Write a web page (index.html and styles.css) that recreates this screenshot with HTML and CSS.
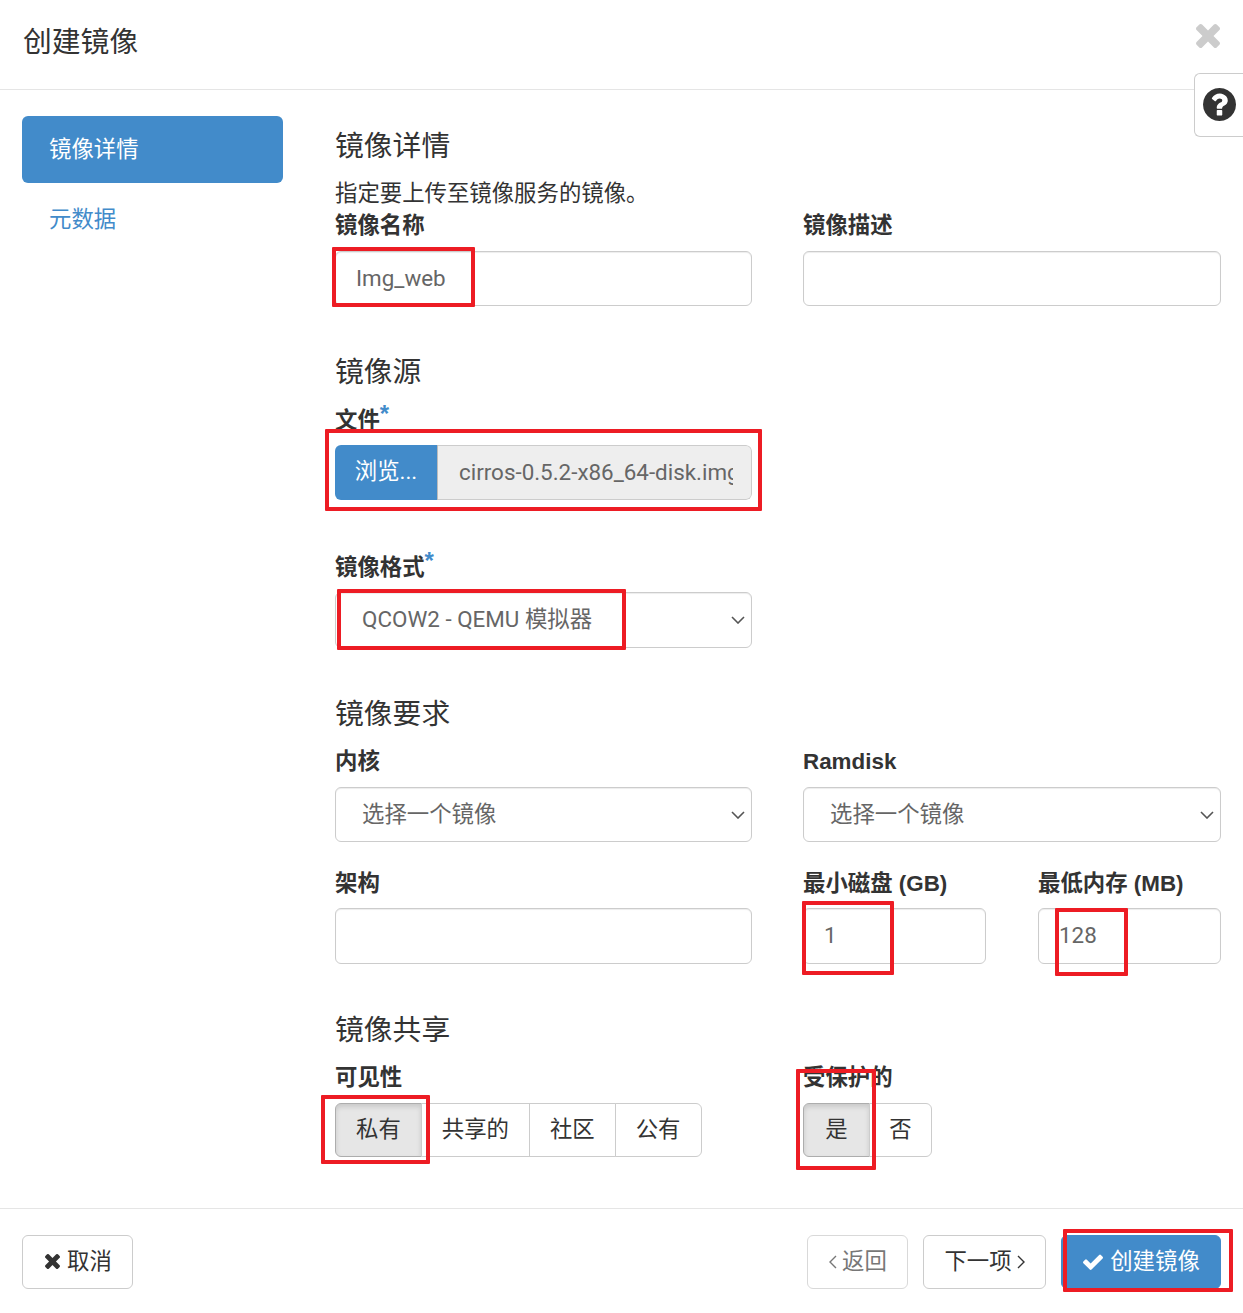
FILE: index.html
```html
<!DOCTYPE html>
<html lang="zh-CN">
<head>
<meta charset="utf-8">
<title>创建镜像</title>
<link rel="stylesheet" href="styles.css">
</head>
<body>
<div class="page">
  <header class="modal-header">
    <h1 class="modal-title">创建镜像</h1>
    <svg class="close-icon" viewBox="110 103 1188 1188"><path d="M1298 1059q0 40-28 68l-136 136q-28 28-68 28t-68-28l-294-294-294 294q-28 28-68 28t-68-28l-136-136q-28-28-28-68t28-68l294-294-294-294q-28-28-28-68t28-68l136-136q28-28 68-28t68 28l294 294 294-294q28-28 68-28t68 28l136 136q28 28 28 68t-28 68l-294 294 294 294q28 28 28 68z"/></svg>
  </header>
  <div class="help-tab">
    <svg class="help-icon" viewBox="0 128 1536 1536"><path d="M896 1376v-192q0-14-9-23t-23-9h-192q-14 0-23 9t-9 23v192q0 14 9 23t23 9h192q14 0 23-9t9-23zm256-672q0-88-55.5-163t-138.5-116-170-41q-243 0-371 213-15 24 8 42l132 100q7 6 19 6 16 0 25-12 53-68 86-92 34-24 86-24 48 0 85.5 26t37.5 59q0 38-20 61t-68 45q-63 28-115.5 86.5t-52.5 125.5v36q0 14 9 23t23 9h192q14 0 23-9t9-23q0-19 21.5-49.5t54.5-49.5q32-18 49-28.5t46-35 44.5-48 28-60.5 12.5-81zm384 192q0 209-103 385.5t-279.5 279.5-385.5 103-385.5-103-279.5-279.5-103-385.5 103-385.5 279.5-279.5 385.5-103 385.5 103 279.5 279.5 103 385.5z"/></svg>
  </div>

  <div class="modal-body">
    <nav class="side-nav">
      <a class="side-link side-link-active">镜像详情</a>
      <a class="side-link">元数据</a>
    </nav>
    <main class="content">
      <section class="section">
        <h2 class="section-title">镜像详情</h2>
        <p class="section-help">指定要上传至镜像服务的镜像。</p>
        <div class="two-col">
          <div class="field">
            <label class="field-label">镜像名称</label>
            <input class="control" type="text" value="Img_web">
          </div>
          <div class="field">
            <label class="field-label">镜像描述</label>
            <input class="control" type="text">
          </div>
        </div>
      </section>

      <section class="section">
        <h2 class="section-title">镜像源</h2>
        <div class="two-col">
          <div class="field field-file">
            <label class="field-label">文件<span class="req">*</span></label>
            <div class="file-box">
              <span class="file-button">浏览...</span>
              <span class="file-name"><span class="file-name-clip">cirros-0.5.2-x86_64-disk.img</span></span>
            </div>
          </div>
        </div>
        <div class="two-col">
          <div class="field">
            <label class="field-label">镜像格式<span class="req">*</span></label>
            <div class="select-wrap">
              <select class="control control-select control-tall"><option>QCOW2 - QEMU 模拟器</option></select>
              <svg class="select-chev" viewBox="0 0 14 8"><path d="m1 1 6 6 6-6"/></svg>
            </div>
          </div>
        </div>
      </section>

      <section class="section">
        <h2 class="section-title">镜像要求</h2>
        <div class="two-col">
          <div class="field">
            <label class="field-label">内核</label>
            <div class="select-wrap">
              <select class="control control-select"><option>选择一个镜像</option></select>
              <svg class="select-chev" viewBox="0 0 14 8"><path d="m1 1 6 6 6-6"/></svg>
            </div>
          </div>
          <div class="field">
            <label class="field-label">Ramdisk</label>
            <div class="select-wrap">
              <select class="control control-select"><option>选择一个镜像</option></select>
              <svg class="select-chev" viewBox="0 0 14 8"><path d="m1 1 6 6 6-6"/></svg>
            </div>
          </div>
        </div>
        <div class="two-col row-tight">
          <div class="field">
            <label class="field-label">架构</label>
            <input class="control control-tall" type="text">
          </div>
          <div class="sub-cols">
            <div class="field">
              <label class="field-label">最小磁盘 (GB)</label>
              <input class="control control-tall" type="text" value="1">
            </div>
            <div class="field">
              <label class="field-label">最低内存 (MB)</label>
              <input class="control control-tall" type="text" value="128">
            </div>
          </div>
        </div>
      </section>

      <section class="section section-last">
        <h2 class="section-title">镜像共享</h2>
        <div class="two-col">
          <div class="field">
            <label class="field-label">可见性</label>
            <div class="btn-group">
              <span class="toggle toggle-on">私有</span>
              <span class="toggle">共享的</span>
              <span class="toggle">社区</span>
              <span class="toggle">公有</span>
            </div>
          </div>
          <div class="field">
            <label class="field-label">受保护的</label>
            <div class="btn-group">
              <span class="toggle toggle-on toggle-yes">是</span>
              <span class="toggle toggle-no">否</span>
            </div>
          </div>
        </div>
      </section>
    </main>
  </div>

  <footer class="modal-footer">
    <button class="btn btn-cancel" type="button">
      <svg class="btn-icon-x" viewBox="110 103 1188 1188"><path d="M1298 1059q0 40-28 68l-136 136q-28 28-68 28t-68-28l-294-294-294 294q-28 28-68 28t-68-28l-136-136q-28-28-28-68t28-68l294-294-294-294q-28-28-28-68t28-68l136-136q28-28 68-28t68 28l294 294 294-294q28-28 68-28t68 28l136 136q28 28 28 68t-28 68l-294 294 294 294q28 28 28 68z"/></svg>取消
    </button>
    <div class="footer-right">
      <button class="btn btn-back" type="button">
        <svg class="chev" viewBox="0 0 8 14"><path d="M7 1 1 7l6 6"/></svg>返回
      </button>
      <button class="btn btn-next" type="button">
        下一项<svg class="chev" viewBox="0 0 8 14"><path d="m1 1 6 6-6 6"/></svg>
      </button>
      <button class="btn btn-primary" type="button">
        <svg class="btn-icon-check" viewBox="121 294 1550 1228"><path d="M1671 566q0 40-28 68l-724 724-136 136q-28 28-68 28t-68-28l-136-136-362-362q-28-28-28-68t28-68l136-136q28-28 68-28t68 28l294 295 656-657q28-28 68-28t68 28l136 136q28 28 28 68z"/></svg>创建镜像
      </button>
    </div>
  </footer>

  <div class="mark mark-name"></div>
  <div class="mark mark-file"></div>
  <div class="mark mark-format"></div>
  <div class="mark mark-disk"></div>
  <div class="mark mark-ram"></div>
  <div class="mark mark-private"></div>
  <div class="mark mark-protected"></div>
  <div class="mark mark-create"></div>
</div>
</body>
</html>
```
FILE: styles.css
```css
* { box-sizing: border-box; }
html, body { margin: 0; padding: 0; background: #fff; }
body {
  font-family: Roboto, "Noto Sans CJK SC", sans-serif;
  font-size: 22.4px;
  color: #333;
}
.page { position: relative; width: 1243px; height: 1313px; overflow: hidden; }

.modal-header {
  height: 90px;
  border-bottom: 1px solid #e5e5e5;
  padding: 0 23px;
  display: flex;
  justify-content: space-between;
  align-items: flex-start;
}
.modal-title { margin: 22px 0 0; font-size: 28.8px; font-weight: 400; line-height: 40px; color: #333; }
.close-icon { width: 24px; height: 24px; margin-top: 24px; fill: #ccc; }
.help-tab {
  position: absolute;
  top: 73px;
  right: 0;
  width: 49px;
  height: 64px;
  background: #fff;
  border: 1px solid #ccc;
  border-right: 0;
  border-radius: 6px 0 0 6px;
  display: flex;
  align-items: flex-start;
  padding: 14px 0 0 8px;
}
.help-icon { width: 33px; height: 33px; fill: #333; }

.modal-body { display: flex; height: 1118px; padding: 0 22px; }
.side-nav { width: 261px; padding-top: 26px; flex: none; display: flex; flex-direction: column; gap: 3px; }
.side-link { display: block; padding: 0 27px; height: 67px; line-height: 67px; color: #428bca; border-radius: 6px; }
.side-link-active { background: #428bca; color: #fff; }
.content { margin-left: 52px; width: 886px; padding-top: 39px; }

.section { margin-bottom: 49px; }
.section-last { margin-bottom: 0; }
.section-title { margin: 0 0 15px; height: 33px; font-size: 28.8px; font-weight: 400; line-height: 34px; color: #333; }
.section-help { margin: -1px 0 0; height: 33px; line-height: 35px; }
.two-col { display: grid; grid-template-columns: 417px 418px; column-gap: 51px; }
.sub-cols { display: grid; grid-template-columns: 183px 183px; column-gap: 52px; }
.field { margin-bottom: 25px; }
.section .two-col:last-child .field { margin-bottom: 0; }
.section .two-col .field-file { margin-bottom: 50px; }
.field-label {
  display: block;
  height: 32px;
  line-height: 33px;
  margin-bottom: 10px;
  font-family: "Liberation Sans", "Noto Sans CJK SC", sans-serif;
  font-weight: 700;
  color: #333;
  white-space: nowrap;
}
.row-tight .field-label { margin-bottom: 9px; }
.req { color: #428bca; font-size: 24px; position: relative; top: -6px; margin-left: 0; }

.control {
  display: block;
  width: 100%;
  height: 55px;
  padding: 0 20px 2px;
  font: inherit;
  color: #666;
  background: #fff;
  border: 1px solid #ccc;
  border-radius: 6px;
  box-shadow: inset 0 1px 1px rgba(0, 0, 0, .075);
  outline: 0;
}
.control-tall { height: 56px; }
.select-wrap { position: relative; }
.control-select { appearance: none; -webkit-appearance: none; padding: 0 40px 2px 26px; }
.select-chev {
  position: absolute;
  right: 7px;
  top: 50%;
  width: 14px;
  height: 8px;
  margin-top: -4px;
  fill: none;
  stroke: #555;
  stroke-width: 1.6;
  pointer-events: none;
}

.file-box { display: flex; height: 55px; border-radius: 6px; overflow: hidden; }
.file-button { flex: none; width: 103px; background: #428bca; color: #fff; text-align: center; line-height: 53px; border-right: 1px solid #bbb; }
.file-name { flex: 1; padding: 0 18px 0 21px; line-height: 53px; color: #666; min-width: 0; background: #eee; border: 1px solid #ccc; border-left: 0; border-radius: 0 6px 6px 0; }
.file-name-clip { display: block; overflow: hidden; white-space: nowrap; }

.btn-group { display: flex; height: 54px; }
.toggle {
  padding: 0 20px;
  line-height: 50px;
  border: 1px solid #ccc;
  margin-left: -1px;
  background: #fff;
  color: #333;
  text-align: center;
}
.toggle:first-child { margin-left: 0; border-radius: 6px 0 0 6px; }
.toggle:last-child { border-radius: 0 6px 6px 0; }
.toggle-on { background: #e6e6e6; border-color: #adadad; box-shadow: inset 0 3px 5px rgba(0, 0, 0, .125); }
.toggle-yes { width: 67px; padding: 0; }
.toggle-no { width: 63px; padding: 0; }

.modal-footer {
  border-top: 1px solid #e5e5e5;
  height: 105px;
  padding: 26px 22px 0;
  display: flex;
  justify-content: space-between;
  align-items: flex-start;
}
.footer-right { display: flex; gap: 15px; }
.btn {
  height: 54px;
  font: inherit;
  color: #333;
  background: #fff;
  border: 1px solid #ccc;
  border-radius: 6px;
  display: flex;
  align-items: center;
  justify-content: center;
  padding: 0 0 3px;
  line-height: 32px;
}
.btn svg { flex: none; position: relative; top: 1px; }
.btn-cancel { width: 111px; gap: 7px; padding-left: 2px; }
.btn-back { width: 101px; color: #777; border-color: #d9d9d9; gap: 5px; padding-left: 1px; }
.btn-next { width: 123px; gap: 5px; }
.btn-primary { width: 160px; background: #428bca; border-color: #428bca; color: #fff; gap: 7px; padding-left: 1px; }
.btn-icon-x { width: 15px; height: 15px; fill: #333; }
.btn-icon-check { width: 20px; height: 16px; fill: #fff; }
.chev { width: 8px; height: 14px; fill: none; stroke: currentColor; stroke-width: 1.4; }

.mark { position: absolute; border: 4px solid #ed1c24; border-radius: 1px; }
.mark-name { left: 332px; top: 247px; width: 143px; height: 60px; }
.mark-file { left: 325px; top: 429px; width: 437px; height: 82px; }
.mark-format { left: 337px; top: 589px; width: 289px; height: 61px; }
.mark-disk { left: 802px; top: 901px; width: 92px; height: 74px; }
.mark-ram { left: 1055px; top: 908px; width: 73px; height: 68px; }
.mark-private { left: 321px; top: 1095px; width: 109px; height: 69px; }
.mark-protected { left: 796px; top: 1069px; width: 80px; height: 101px; }
.mark-create { left: 1063px; top: 1229px; width: 170px; height: 63px; }
```
